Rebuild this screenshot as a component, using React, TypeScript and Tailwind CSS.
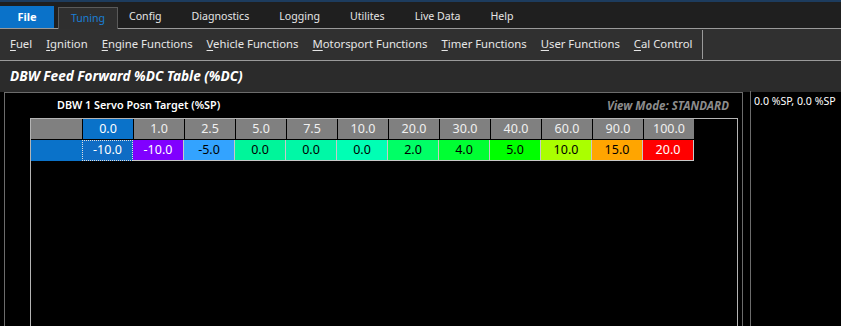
import React from "react";

const menus = ["Config", "Diagnostics", "Logging", "Utilites", "Live Data", "Help"];
const tools = [
  ["F", "uel"],
  ["I", "gnition"],
  ["E", "ngine Functions"],
  ["V", "ehicle Functions"],
  ["M", "otorsport Functions"],
  ["T", "imer Functions"],
  ["U", "ser Functions"],
  ["C", "al Control"],
];

const cols = ["0.0", "1.0", "2.5", "5.0", "7.5", "10.0", "20.0", "30.0", "40.0", "60.0", "90.0", "100.0"];
const vals: { v: string; bg: string; fg: string }[] = [
  { v: "-10.0", bg: "bg-[#0f6cc4]", fg: "text-white" },
  { v: "-10.0", bg: "bg-[#8000ff]", fg: "text-white" },
  { v: "-5.0", bg: "bg-[#33a3ff]", fg: "text-black" },
  { v: "0.0", bg: "bg-[#00f59a]", fg: "text-black" },
  { v: "0.0", bg: "bg-[#00f8a6]", fg: "text-black" },
  { v: "0.0", bg: "bg-[#00ffb4]", fg: "text-black" },
  { v: "2.0", bg: "bg-[#00ff66]", fg: "text-black" },
  { v: "4.0", bg: "bg-[#00ff33]", fg: "text-black" },
  { v: "5.0", bg: "bg-[#00ff00]", fg: "text-black" },
  { v: "10.0", bg: "bg-[#aaff00]", fg: "text-black" },
  { v: "15.0", bg: "bg-[#ffa500]", fg: "text-black" },
  { v: "20.0", bg: "bg-[#ff0000]", fg: "text-white" },
];

export default function App() {
  return (
    <div
      className="w-[841px] h-[326px] overflow-hidden bg-[#2b2b2b] flex flex-col text-[12px] text-[#e6e6e6]"
      style={{ fontFamily: '"Noto Sans", "Open Sans", sans-serif' }}
    >
      {/* Menu row */}
      <div className="h-[29px] shrink-0 bg-[#1f1f1f] border-t-2 border-[#1d3c5e] flex items-end text-[10.6px]">
        <div className="w-[54px] h-[23px] bg-[#0a72c9] text-white font-bold flex items-center justify-center border-b border-[#9a9a9a] text-[11px]">
          File
        </div>
        <div className="w-[4px] h-[1px] bg-[#9a9a9a]" />
        <div className="w-[60px] h-[22px] bg-[#2f2f2f] border border-b-0 border-[#5a5a5a] text-[#1a7fd6] flex items-center justify-center">
          Tuning
        </div>
        <div className="flex-1 h-[23px] flex items-center border-b border-[#9a9a9a]">
          <div className="flex items-center gap-[30px] pl-[11px]">
            {menus.map((m) => (
              <span key={m}>{m}</span>
            ))}
          </div>
        </div>
      </div>

      {/* Toolbar */}
      <div className="h-[32px] shrink-0 bg-[#303030] border-b border-[#9a9a9a] flex items-center pl-[10px] text-[11.3px]">
        <div className="flex items-center gap-[14px]">
          {tools.map(([a, b]) => (
            <span key={a + b} className="whitespace-nowrap">
              <span className="underline underline-offset-2">{a}</span>
              {b}
            </span>
          ))}
        </div>
        <div className="ml-[10px] w-[1px] h-[29px] bg-[#9a9a9a]" />
      </div>

      {/* Title */}
      <div className="h-[31px] shrink-0 flex items-center pl-[10px]">
        <span className="text-[13.6px] font-bold italic text-white">DBW Feed Forward %DC Table (%DC)</span>
      </div>

      {/* Content */}
      <div className="flex-1 flex bg-black pl-[4px] min-h-0">
        <div className="w-[739px] shrink-0 border-l border-t border-r border-[#6c6c6c] flex flex-col">
          <div className="h-[25px] shrink-0 flex items-center justify-between pl-[52px] pr-[13px]">
            <span className="font-semibold text-white text-[10.8px]">DBW 1 Servo Posn Target (%SP)</span>
            <span className="font-bold italic text-[#8c8c8c] text-[11.5px]">View Mode: STANDARD</span>
          </div>
          <div className="ml-[25px] mr-[4px] flex-1 border-l border-t border-r border-[#b4b4b4]">
            <div className="flex h-[20px]">
              <div className="w-[51px] bg-[#808080]" />
              {cols.map((c, i) => (
                <div
                  key={c}
                  className={`w-[51px] border-l border-black flex items-center justify-center text-[12.5px] ${
                    i === 0 ? "bg-[#0a72c9] text-white" : "bg-[#808080] text-[#f0f0f0]"
                  }`}
                >
                  {c}
                </div>
              ))}
            </div>
            <div className="h-[1px] w-[663px] bg-black" />
            <div className="flex h-[21px]">
              <div className="w-[51px] bg-[#0a72c9]" />
              {vals.map((d, i) => (
                <div
                  key={i}
                  className={`w-[51px] flex items-center justify-center text-[12.5px] ${d.bg} ${d.fg} ${
                    i === 0 ? "border border-dotted border-[#e0e0e0]" : "border-b border-r border-[#c8c8c8]"
                  }`}
                >
                  {d.v}
                </div>
              ))}
            </div>
          </div>
        </div>
        <div className="w-[7px] shrink-0" />
        <div className="flex-1 border-l border-[#6c6c6c] -mt-[1px] pl-[3px] pt-[3px] text-white text-[10.6px] whitespace-nowrap overflow-hidden">
          0.0 %SP, 0.0 %SP
        </div>
      </div>
    </div>
  );
}
